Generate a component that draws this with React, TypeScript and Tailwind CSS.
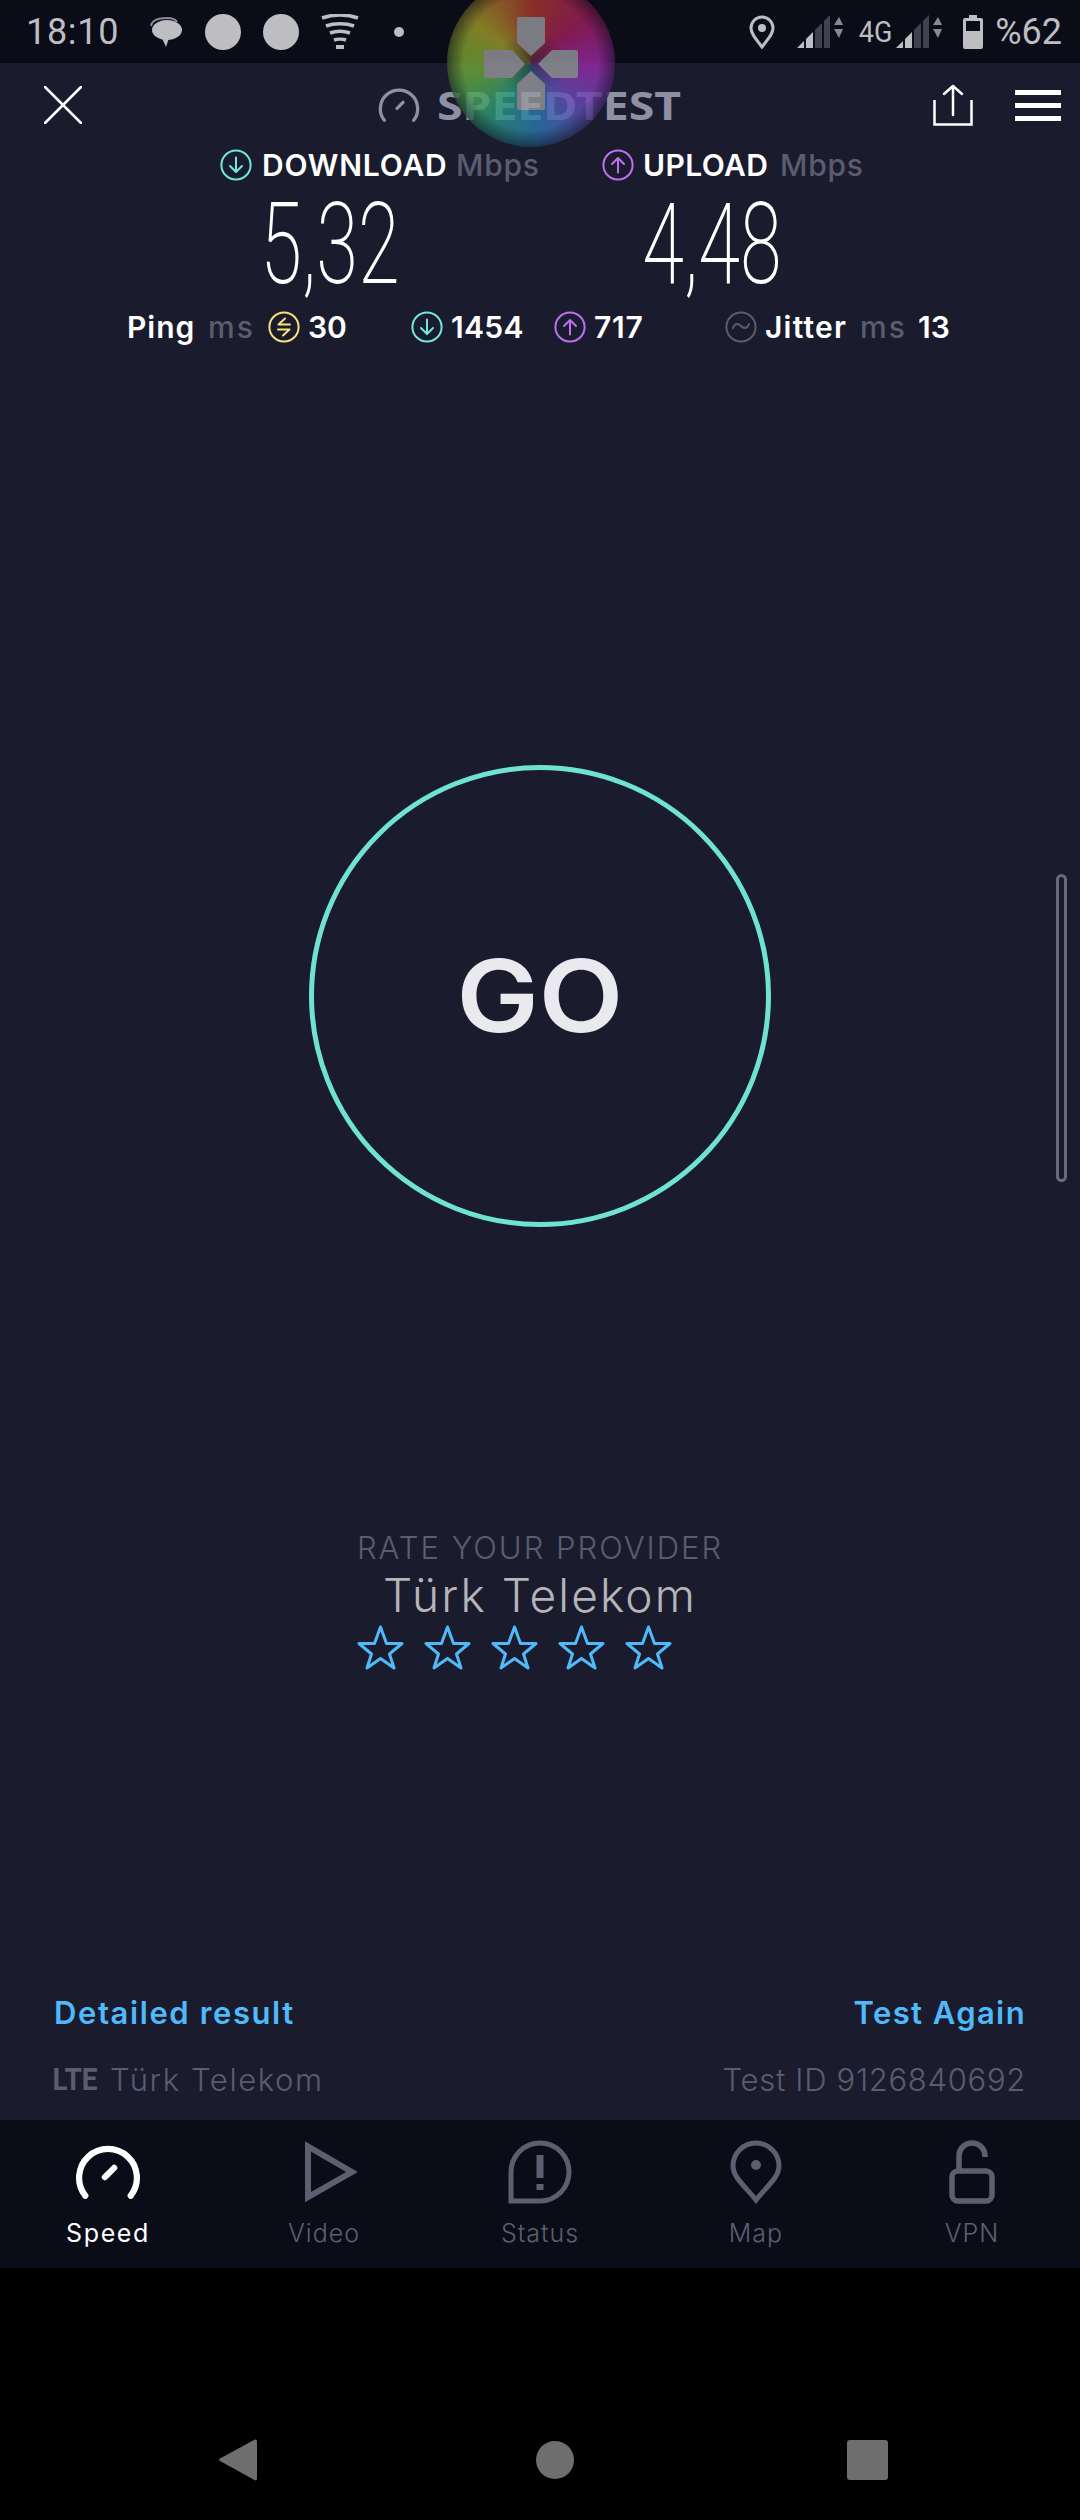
const ArrowCircle = ({ color, up }: { color: string; up?: boolean }) => (
  <svg width="32" height="32" viewBox="0 0 32 32" fill="none" stroke={color} strokeWidth="2" strokeLinecap="round" strokeLinejoin="round" className="shrink-0">
    <circle cx="16" cy="16" r="14.6" />
    {up ? <path d="M16 23.5V9.5M10 15l6-6 6 6" /> : <path d="M16 8.5v14M10 17l6 6 6-6" />}
  </svg>
);

const PingIcon = () => (
  <svg width="32" height="32" viewBox="0 0 32 32" fill="none" stroke="#f7e37e" strokeWidth="2" strokeLinecap="round" strokeLinejoin="round" className="shrink-0">
    <circle cx="16" cy="16" r="14.6" />
    <path d="M22 13.5H10.5L17 7.5M10 18.5h11.5L15 24.5" />
  </svg>
);

const JitterIcon = () => (
  <svg width="32" height="32" viewBox="0 0 32 32" fill="none" stroke="#5b5d6e" strokeWidth="2" strokeLinecap="round" className="shrink-0">
    <circle cx="16" cy="16" r="14.6" />
    <path d="M8 17c2-5 5-5 8-2s6 3 8-2" />
  </svg>
);

const Gauge = ({ size, height, color, width }: { size: number; height: number; color: string; width: number }) => (
  <svg width={size} height={height} viewBox="0 0 62 54" fill="none" stroke={color} strokeWidth={width} strokeLinecap="round">
    <path d="M9 50A28 28 0 1 1 53 50" />
    <path d="M28 32l9-9" />
  </svg>
);

const Star = () => (
  <svg width="47" height="45" viewBox="0 0 47 45" fill="none" stroke="#4fb9f9" strokeWidth="3" strokeLinejoin="round">
    <path d="M23.5 2l6 16.5h15.5L32.5 29l4.500 14-13.500-9.500L10 43l4.500-14L2 18.500h15.500z" />
  </svg>
);

const Signal = () => (
  <svg width="46" height="34" viewBox="0 0 46 34">
    <path d="M0 33L7 26V33Z" fill="#bdbdc2" />
    <path d="M9 24l7-7v16H9Z" fill="#bdbdc2" />
    <path d="M18 15l7-7v25h-7Z" fill="#41424f" />
    <path d="M27 6l6-6v33h-6Z" fill="#41424f" />
    <path d="M37 10l5-8 4 8Z" fill="#bdbdc2" opacity="0.7" />
    <path d="M37 14l5 9 4-9Z" fill="#bdbdc2" opacity="0.7" />
  </svg>
);

function StatusBar() {
  return (
    <div className="h-[63px] shrink-0 bg-[#0a0c18] flex items-center pl-[26px] pr-[18px] text-[#bdbdc2] font-['Roboto',sans-serif] text-[36px]">
      <span className="w-[92px] tracking-[0.7px] leading-none">18:10</span>
      <svg width="34" height="32" viewBox="0 0 34 32" className="ml-[31px]">
        <path d="M2 10C3 4 9 2 18 2c6 0 9 2 10 4" fill="none" stroke="#8c8c92" strokeWidth="2" />
        <ellipse cx="18" cy="14" rx="15" ry="10" fill="#bdbdc2" />
        <path d="M12 20l5 11 3-9Z" fill="#bdbdc2" />
      </svg>
      <div className="w-9 h-9 rounded-full bg-[#bdbdc2] ml-[22px]" />
      <div className="w-9 h-9 rounded-full bg-[#bdbdc2] ml-[22px]" />
      <svg width="38" height="36" viewBox="0 0 38 36" fill="none" stroke="#bdbdc2" strokeWidth="3.500" className="ml-[22px]">
        <path d="M1 4c11-4 25-4 36 0M5 12c8-3 20-3 28 0M9 19c6-2 14-2 20 0M13 26c3-1 9-1 12 0" />
        <path d="M15 33h8" strokeWidth="4" />
      </svg>
      <div className="w-[10px] h-[10px] rounded-full bg-[#bdbdc2] ml-[35px]" />
      <svg width="26" height="34" viewBox="0 0 26 34" fill="none" className="ml-auto">
        <path d="M13 32C7 24 2 19 2 13a11 11 0 0 1 22 0c0 6-5 11-11 19Z" stroke="#bdbdc2" strokeWidth="3" />
        <circle cx="13" cy="13" r="4" fill="#bdbdc2" />
      </svg>
      <div className="ml-[22px]"><Signal /></div>
      <span className="ml-[14px] text-[30px] leading-none scale-x-90">4G</span>
      <div className="ml-[2px]"><Signal /></div>
      <svg width="20" height="34" viewBox="0 0 20 34" className="ml-[21px]">
        <path d="M6 0h8v3h4a2 2 0 0 1 2 2v27a2 2 0 0 1-2 2H2a2 2 0 0 1-2-2V5a2 2 0 0 1 2-2h4Z" fill="#bdbdc2" />
        <rect x="3" y="6" width="14" height="10" fill="#0a0c18" />
      </svg>
      <span className="ml-[12px] leading-none">%62</span>
    </div>
  );
}

function Header() {
  return (
    <div className="h-[84px] flex items-center pl-[44px] pr-[19px]">
      <svg width="38" height="38" viewBox="0 0 38 38" stroke="#ffffff" strokeWidth="2.500" strokeLinecap="round">
        <path d="M1 1l36 36M37 1L1 37" />
      </svg>
      <div className="flex items-center ml-[296px] gap-[17px]">
        <Gauge size={42} height={36} color="#8e90a4" width={5} />
        <span className="text-[#8e90a4] text-[40px] font-bold leading-none w-[250px] origin-left scale-x-[1.16]">SPEEDTEST</span>
      </div>
      <svg width="40" height="42" viewBox="0 0 40 42" fill="none" stroke="#ffffff" strokeWidth="2.500" className="ml-auto">
        <path d="M1.500 16v24.500h37V16" />
        <path d="M20 31V2M11 10l9-8 9 8" strokeLinecap="round" strokeLinejoin="round" />
      </svg>
      <div className="flex flex-col gap-[8px] ml-[42px]">
        <div className="w-[46px] h-[5px] bg-white" />
        <div className="w-[46px] h-[5px] bg-white" />
        <div className="w-[46px] h-[5px] bg-white" />
      </div>
    </div>
  );
}

function Results() {
  return (
    <div className="font-['Inter',sans-serif] text-white">
      <div className="h-[36px] flex items-center pl-[220px] text-[30px] font-semibold leading-none">
        <div className="flex items-center w-[382px]">
          <ArrowCircle color="#71e9dc" />
          <span className="ml-[10px] w-[194px] tracking-[0.8px]">DOWNLOAD</span>
          <span className="text-[#5b5d6e] font-medium tracking-[0.8px]">Mbps</span>
        </div>
        <div className="flex items-center">
          <ArrowCircle color="#c06ff0" up />
          <span className="ml-[9px] w-[137px] tracking-[0.4px]">UPLOAD</span>
          <span className="text-[#5b5d6e] font-medium tracking-[0.8px]">Mbps</span>
        </div>
      </div>
      <div className="h-[122px] mb-[4px] flex items-center font-['Roboto',sans-serif] font-extralight text-[113px] leading-none">
        <div className="w-[660px] text-center scale-x-[0.67]">5,32</div>
        <div className="w-[420px] -ml-[158px] text-center scale-x-[0.67]">4,48</div>
      </div>
      <div className="h-[36px] flex items-center pl-[127px] text-[30px] font-semibold leading-none">
        <span className="w-[81px] tracking-[1px]">Ping</span>
        <span className="w-[60px] text-[#5b5d6e] font-medium tracking-[2px]">ms</span>
        <PingIcon />
        <span className="ml-2 w-[103px]">30</span>
        <ArrowCircle color="#71e9dc" />
        <span className="ml-2 w-[103px] tracking-[0.3px]">1454</span>
        <ArrowCircle color="#c06ff0" up />
        <span className="ml-2 w-[131px] tracking-[0.8px]">717</span>
        <JitterIcon />
        <span className="ml-2 w-[95px] tracking-[1.2px]">Jitter</span>
        <span className="w-[58px] text-[#5b5d6e] font-medium tracking-[2px]">ms</span>
        <span>13</span>
      </div>
    </div>
  );
}

function RateProvider() {
  return (
    <div className="flex flex-col items-center font-['Inter',sans-serif] mt-[302px]">
      <div className="text-[31px] font-light text-[#5b5d6e] leading-[38px] tracking-[2px]">RATE YOUR PROVIDER</div>
      <div className="text-[46px] font-light text-[#b4b4b9] leading-[56px] tracking-[2.1px]">Türk Telekom</div>
      <div className="flex gap-[20px] -ml-[52px] mt-[2px]">
        <Star /><Star /><Star /><Star /><Star />
      </div>
    </div>
  );
}

function Footer() {
  return (
    <div className="mt-auto px-[54px] font-['Inter',sans-serif]">
      <div className="flex justify-between text-[31px] font-semibold text-[#4fb9f9] leading-[38px]">
        <span className="tracking-[1.6px]">Detailed result</span>
        <span className="tracking-[1.4px]">Test Again</span>
      </div>
      <div className="flex justify-between items-center text-[31px] font-light text-[#5b5d6e] leading-[38px] mt-[29px] mb-[21px]">
        <div className="flex items-center gap-[12px] -ml-[2px]">
          <span className="font-['Roboto',sans-serif] font-bold text-[31px] scale-x-90 -mx-[2px]">LTE</span>
          <span className="tracking-[1.6px]">Türk Telekom</span>
        </div>
        <span className="tracking-[0.7px]">Test ID 9126840692</span>
      </div>
    </div>
  );
}

const navGrey = "#5d5f70";

const navItems = [
  { label: "Speed", active: true, icon: <Gauge size={64} height={56} color="#ffffff" width={6} /> },
  {
    label: "Video",
    icon: (
      <svg width="52" height="62" viewBox="0 0 52 62" fill="none" stroke={navGrey} strokeWidth="6" className="ml-[14px]">
        <path d="M3 5.500V56L47 31Z" />
      </svg>
    ),
  },
  {
    label: "Status",
    icon: (
      <svg width="64" height="64" viewBox="0 0 64 64" fill="none" stroke={navGrey} strokeWidth="5">
        <path d="M3 61V32a29 29 0 1 1 29 29Z" />
        <path d="M32 15v23M32 44v6" strokeWidth="7" />
      </svg>
    ),
  },
  {
    label: "Map",
    icon: (
      <svg width="52" height="64" viewBox="0 0 52 64" fill="none" stroke={navGrey} strokeWidth="5">
        <path d="M26 60C17 48 3 38 3 26a23 23 0 0 1 46 0c0 12-14 22-23 34Z" />
        <circle cx="26" cy="25" r="5" fill={navGrey} stroke="none" />
      </svg>
    ),
  },
  {
    label: "VPN",
    icon: (
      <svg width="46" height="64" viewBox="0 0 46 64" fill="none" stroke={navGrey} strokeWidth="5.500">
        <rect x="3" y="31" width="40" height="30" rx="6" />
        <path d="M10 31V16a13 13 0 0 1 26 0v1" />
      </svg>
    ),
  },
];

function BottomNav() {
  return (
    <div className="h-[148px] shrink-0 bg-[#0a0c18] grid grid-cols-5 font-['Inter',sans-serif]">
      {navItems.map((item) => (
        <div key={item.label} className="flex flex-col items-center pt-[19px]">
          <div className="h-[66px] flex items-center justify-center">{item.icon}</div>
          <span className={`mt-[12px] text-[25px] leading-[32px] ${item.active ? "text-white tracking-[1.6px]" : "text-[#5d5f70] font-light tracking-[1px]"}`}>
            {item.label}
          </span>
        </div>
      ))}
    </div>
  );
}

export default function App() {
  return (
    <div className="relative w-[1080px] h-[2520px] overflow-hidden bg-black flex flex-col">
      <StatusBar />
      <div className="flex-1 bg-[#1a1c2e] flex flex-col">
        <Header />
        <Results />
        <div className="mt-[420px] mx-auto w-[462px] h-[462px] rounded-full border-[5px] border-[#6fe3d2] flex items-center justify-center font-['Inter',sans-serif] text-[100px] font-semibold text-[#e9e9ee]">
          <span className="scale-x-[1.1]">GO</span>
        </div>
        <RateProvider />
        <Footer />
      </div>
      <BottomNav />
      <div className="h-[252px] shrink-0 bg-black flex items-start justify-center pt-[171px] pl-[26px]">
        <svg width="38" height="42" viewBox="0 0 38 42">
          <path d="M36 0.500c1 0 2 .5 2 2v37c0 1.500-1 2.500-2.500 1.500L1 22c-1.200-.8-1.200-1.700 0-2.500L35 1Z" fill="#6e6e6e" />
        </svg>
        <div className="w-[38px] h-[38px] mt-[2px] rounded-full bg-[#6e6e6e] ml-[279px]" />
        <div className="w-[41px] h-[40px] mt-[1px] rounded-[3px] bg-[#6e6e6e] ml-[273px]" />
      </div>
      {/* chat-head bubble floating over the app */}
      <div className="absolute left-[447px] top-[-21px] w-[168px] h-[168px] rounded-full opacity-80 bg-[radial-gradient(closest-side,rgba(40,40,50,0.6)_0%,rgba(40,40,50,0)_40%,rgba(0,0,0,0)_80%,rgba(10,12,24,0.55)_100%),conic-gradient(from_0deg,#a83a2a,#a01e5a_50deg,#9a2aa8_90deg,#6a4ab8_130deg,#2a7ab0_175deg,#2a9a7a_215deg,#6aaa3a_260deg,#a09a2a_305deg,#a83a2a)]">
        <svg width="168" height="168" viewBox="447 -21 168 168" fill="#98989e">
          <path d="M519 17h24a2 2 0 0 1 2 2v24L531 56 517 43V19a2 2 0 0 1 2-2Z" />
          <path d="M486 50h26l13 14-13 14h-26a2 2 0 0 1-2-2V52a2 2 0 0 1 2-2Z" />
          <path d="M576 50h-24l-14 14 14 14h24a2 2 0 0 0 2-2V52a2 2 0 0 0-2-2Z" />
          <path d="M531 71l14 13v24a2 2 0 0 1-2 2h-24a2 2 0 0 1-2-2V84Z" />
        </svg>
      </div>
      <div className="absolute left-[1056px] top-[874px] w-[11px] h-[308px] rounded-full border-[3px] border-[#6a6b78]" />
    </div>
  );
}
